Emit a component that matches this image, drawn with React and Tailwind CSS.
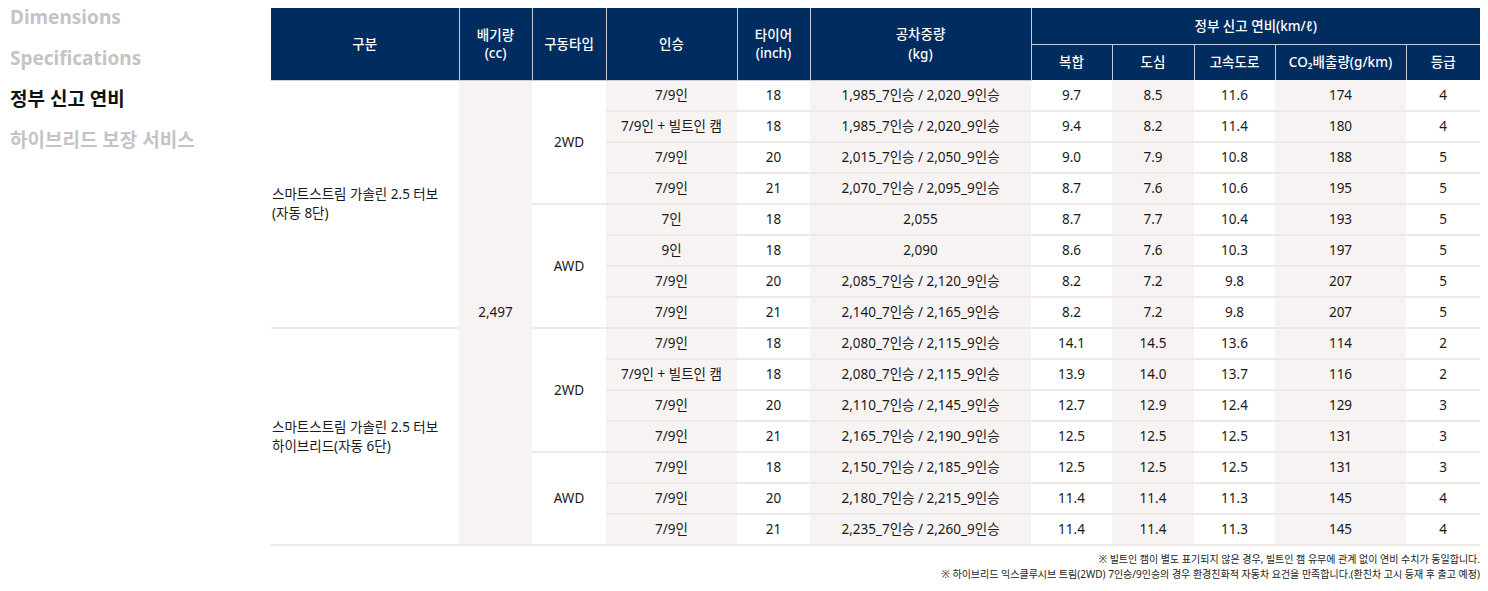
import React from "react";

const font = { fontFamily: '"Noto Sans", "Noto Sans CJK KR", sans-serif' };

const groups = [
  {
    name: ["스마트스트림 가솔린 2.5 터보", "(자동 8단)"],
    drives: [
      {
        drive: "2WD",
        rows: [
          ["7/9인", "18", "1,985_7인승 / 2,020_9인승", "9.7", "8.5", "11.6", "174", "4"],
          ["7/9인 + 빌트인 캠", "18", "1,985_7인승 / 2,020_9인승", "9.4", "8.2", "11.4", "180", "4"],
          ["7/9인", "20", "2,015_7인승 / 2,050_9인승", "9.0", "7.9", "10.8", "188", "5"],
          ["7/9인", "21", "2,070_7인승 / 2,095_9인승", "8.7", "7.6", "10.6", "195", "5"],
        ],
      },
      {
        drive: "AWD",
        rows: [
          ["7인", "18", "2,055", "8.7", "7.7", "10.4", "193", "5"],
          ["9인", "18", "2,090", "8.6", "7.6", "10.3", "197", "5"],
          ["7/9인", "20", "2,085_7인승 / 2,120_9인승", "8.2", "7.2", "9.8", "207", "5"],
          ["7/9인", "21", "2,140_7인승 / 2,165_9인승", "8.2", "7.2", "9.8", "207", "5"],
        ],
      },
    ],
  },
  {
    name: ["스마트스트림 가솔린 2.5 터보", "하이브리드(자동 6단)"],
    drives: [
      {
        drive: "2WD",
        rows: [
          ["7/9인", "18", "2,080_7인승 / 2,115_9인승", "14.1", "14.5", "13.6", "114", "2"],
          ["7/9인 + 빌트인 캠", "18", "2,080_7인승 / 2,115_9인승", "13.9", "14.0", "13.7", "116", "2"],
          ["7/9인", "20", "2,110_7인승 / 2,145_9인승", "12.7", "12.9", "12.4", "129", "3"],
          ["7/9인", "21", "2,165_7인승 / 2,190_9인승", "12.5", "12.5", "12.5", "131", "3"],
        ],
      },
      {
        drive: "AWD",
        rows: [
          ["7/9인", "18", "2,150_7인승 / 2,185_9인승", "12.5", "12.5", "12.5", "131", "3"],
          ["7/9인", "20", "2,180_7인승 / 2,215_9인승", "11.4", "11.4", "11.3", "145", "4"],
          ["7/9인", "21", "2,235_7인승 / 2,260_9인승", "11.4", "11.4", "11.3", "145", "4"],
        ],
      },
    ],
  },
];

const totalRows = groups.reduce((a, g) => a + g.drives.reduce((b, d) => b + d.rows.length, 0), 0);

const dataBg = ["bg-[#f6f3f2]", "bg-white", "bg-[#f6f3f2]", "bg-white", "bg-[#f6f3f2]", "bg-white", "bg-[#f6f3f2]", "bg-white"];

const th = "bg-[#002c5f] text-white font-medium text-[13.5px] leading-[18px] border border-[#c5cdd8] text-center align-middle p-0";
const td = "text-[13.5px] text-[#1a1a1a] text-center align-middle p-0 h-[31px] border-b-2 border-[#edeae6]";

export default function App() {
  const body = [];
  let first = true;
  groups.forEach((g, gi) => {
    const gRows = g.drives.reduce((b, d) => b + d.rows.length, 0);
    g.drives.forEach((d, di) => {
      d.rows.forEach((r, ri) => {
        body.push(
          <tr key={`${gi}-${di}-${ri}`}>
            {di === 0 && ri === 0 && (
              <td rowSpan={gRows} className="text-[13.5px] leading-[19px] text-[#1a1a1a] text-left align-middle p-0 pl-[1px] bg-white border-b-2 border-[#edeae6]">
                {g.name[0]}
                <br />
                {g.name[1]}
              </td>
            )}
            {first && (
              <td rowSpan={totalRows} className="text-[13.5px] text-[#1a1a1a] text-center align-middle p-0 bg-[#f6f3f2] border-b-2 border-[#edeae6]">
                2,497
              </td>
            )}
            {ri === 0 && (
              <td rowSpan={d.rows.length} className="text-[13.5px] text-[#1a1a1a] text-center align-middle p-0 bg-white border-b-2 border-[#edeae6]">
                {d.drive}
              </td>
            )}
            {r.map((v, i) => (
              <td key={i} className={`${td} ${dataBg[i]}`}>
                {v}
              </td>
            ))}
          </tr>
        );
        first = false;
      });
    });
  });

  return (
    <div className="flex w-[1488px] h-[591px] bg-white overflow-hidden" style={font}>
      <div className="w-[271px] shrink-0 flex flex-col gap-[17px] pt-[5px] pl-[10px]">
        <div className="text-[19px] leading-[24px] font-bold text-[#c4c4c4]">Dimensions</div>
        <div className="text-[19px] leading-[24px] font-bold text-[#c4c4c4]">Specifications</div>
        <div className="text-[19px] leading-[24px] font-bold text-[#111]">정부 신고 연비</div>
        <div className="text-[19px] leading-[24px] font-bold text-[#c4c4c4]">하이브리드 보장 서비스</div>
      </div>
      <div className="pt-[8px] w-[1209px] flex flex-col">
        <table className="w-[1209px] table-fixed border-collapse">
          <colgroup>
            <col className="w-[188px]" />
            <col className="w-[73px]" />
            <col className="w-[74px]" />
            <col className="w-[131px]" />
            <col className="w-[73px]" />
            <col className="w-[221px]" />
            <col className="w-[81px]" />
            <col className="w-[82px]" />
            <col className="w-[81px]" />
            <col className="w-[131px]" />
            <col className="w-[74px]" />
          </colgroup>
          <thead>
            <tr className="h-[36px]">
              <th rowSpan={2} className={`${th} border-l-0 border-t-0`}>구분</th>
              <th rowSpan={2} className={`${th} border-t-0`}>배기량<br />(cc)</th>
              <th rowSpan={2} className={`${th} border-t-0`}>구동타입</th>
              <th rowSpan={2} className={`${th} border-t-0`}>인승</th>
              <th rowSpan={2} className={`${th} border-t-0`}>타이어<br />(inch)</th>
              <th rowSpan={2} className={`${th} border-t-0 leading-[20px]`}>공차중량<br />(kg)</th>
              <th colSpan={5} className={`${th} border-t-0 border-r-0`}>정부 신고 연비(km/ℓ)</th>
            </tr>
            <tr className="h-[36px]">
              <th className={`${th} border-b-0`}>복합</th>
              <th className={`${th} border-b-0`}>도심</th>
              <th className={`${th} border-b-0`}>고속도로</th>
              <th className={`${th} border-b-0`}>CO₂배출량(g/km)</th>
              <th className={`${th} border-b-0 border-r-0`}>등급</th>
            </tr>
          </thead>
          <tbody>{body}</tbody>
        </table>
        <div className="pt-[6px] text-right text-[10px] leading-[15px] text-[#222]">
          <p>※ 빌트인 캠이 별도 표기되지 않은 경우, 빌트인 캠 유무에 관계 없이 연비 수치가 동일합니다.</p>
          <p>※ 하이브리드 익스클루시브 트림(2WD) 7인승/9인승의 경우 환경친화적 자동차 요건을 만족합니다.(환친차 고시 등재 후 출고 예정)</p>
        </div>
      </div>
    </div>
  );
}
